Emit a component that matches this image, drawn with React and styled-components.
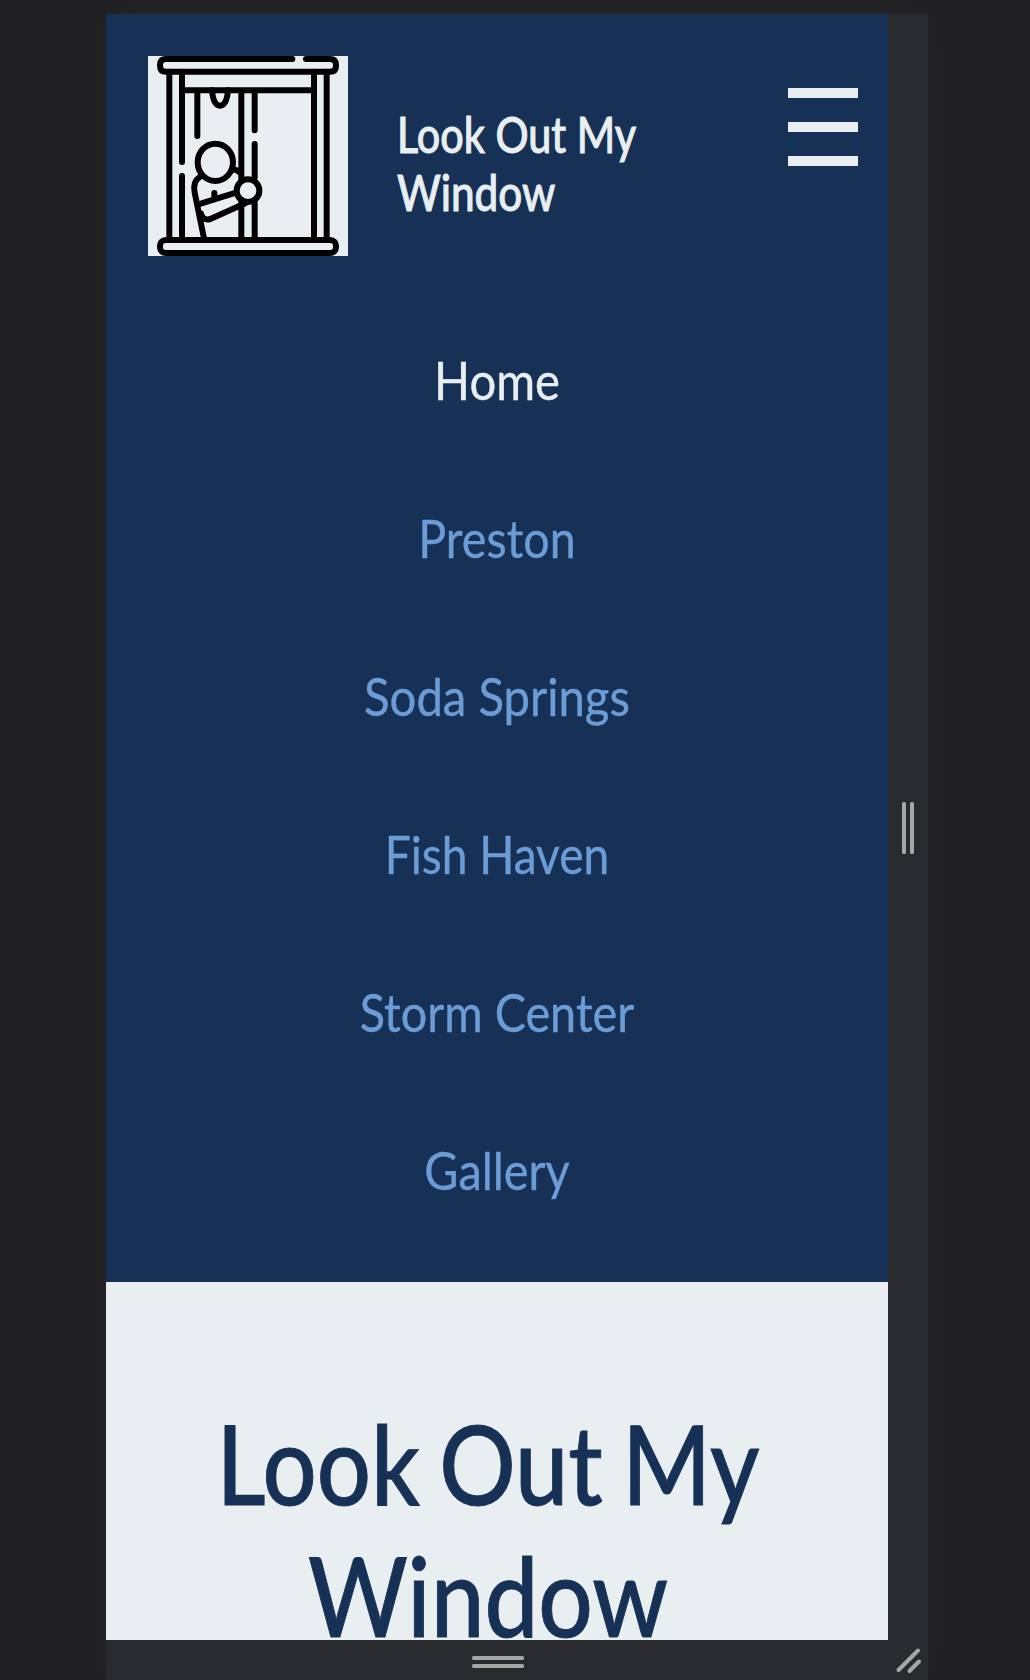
import React from "react";
import styled, { createGlobalStyle } from "styled-components";

const navy = "#173156";
const mist = "#e9eff1";
const sky = "#6b9cd6";

const GlobalStyle = createGlobalStyle`
  *, *::before, *::after { box-sizing: border-box; }
  body {
    margin: 0;
    background: #202022;
    font-family: Lato, "Open Sans", sans-serif;
  }
`;

const Stage = styled.div`
  height: 1680px;
  padding: 14px 102px 0 106px;
  overflow: hidden;
`;

const Device = styled.div`
  display: grid;
  grid-template-columns: 782px 40px;
  grid-template-rows: 1626px 40px;
  background: #292a2d;
  box-shadow: 0 0 40px rgba(255, 245, 235, 0.035);
`;

const Screen = styled.div`
  display: flex;
  flex-direction: column;
  overflow: hidden;
  background: ${mist};
`;

const Rail = styled.div`
  display: flex;
  flex-direction: ${(p) => (p.$vertical ? "row" : "column")};
  align-items: center;
  justify-content: center;
  gap: 4px;
  padding: ${(p) => (p.$vertical ? "2px 0 0" : "4px 0 0 2px")};
`;

const Grip = styled.span`
  width: ${(p) => (p.$vertical ? "4px" : "52px")};
  height: ${(p) => (p.$vertical ? "52px" : "4px")};
  border-radius: 1.5px;
  background: #a6a6a6;
`;

const Header = styled.header`
  flex: none;
  height: 1268px;
  background: ${navy};
`;

const Brand = styled.div`
  display: flex;
  align-items: flex-start;
  height: 287px;
  padding: 42px 30px 0 42px;
`;

const Logo = styled.svg`
  display: block;
  flex: none;
  width: 200px;
  height: 200px;
  background: ${mist};
`;

const SiteName = styled.div`
  flex: 1;
  margin: 49px 0 0 49px;
  color: ${mist};
  font-size: 49.3px;
  font-weight: 500;
  line-height: 58px;
  -webkit-text-stroke: 0.9px ${mist};
`;

const Line = styled.span`
  display: block;
  white-space: nowrap;
  transform: scaleX(${(p) => p.$fit});
  transform-origin: ${(p) => p.$from || "center"};
`;

const MenuButton = styled.button`
  display: flex;
  flex-direction: column;
  gap: 24px;
  width: 70px;
  margin: 32px 0 0;
  padding: 0;
  border: 0;
  background: none;
`;

const Bar = styled.span`
  height: 10px;
  background: ${mist};
`;

const Nav = styled.nav`
  display: flex;
  flex-direction: column;
`;

const NavLink = styled.a`
  color: ${(p) => (p.$active ? mist : sky)};
  font-size: 52.6px;
  line-height: 158px;
  text-align: center;
  text-decoration: none;
  -webkit-text-stroke: 0.4px currentColor;
`;

const Hero = styled.main`
  flex: none;
  padding: 114px 18px 0 0;
`;

const HeroTitle = styled.h1`
  margin: 0;
  color: ${navy};
  font-size: 111px;
  font-weight: 500;
  line-height: 132px;
  text-align: center;
  word-spacing: -0.05em;
  -webkit-text-stroke: 0.9px ${navy};
`;

const links = [
  { label: "Home", fit: 0.897, active: true },
  { label: "Preston", fit: 0.886 },
  { label: "Soda Springs", fit: 0.898 },
  { label: "Fish Haven", fit: 0.876 },
  { label: "Storm Center", fit: 0.889 },
  { label: "Gallery", fit: 0.89 },
];

function WindowLogo() {
  return (
    <Logo viewBox="0 0 600 600" fill="none" stroke="#000" strokeWidth="18" strokeLinecap="round" strokeLinejoin="round" aria-hidden="true">
      <path d="M433 9H54Q36 9 36 27V29Q36 47 54 47H546Q564 47 564 29V27Q564 9 546 9H474" />
      <rect x="36" y="552" width="528" height="39" rx="17" />
      <path d="M64 47V552M536 47V552M498 47V552M102 47V318M102 360V552" />
      <path d="M102 103H498M148 103V240M280 103V552M320 103V223M320 264V365M320 440V552" />
      <path d="M192 103Q196 149 216 149Q236 149 240 103" />
      <path d="M156 362C141 372 135 387 140 410L169 552" />
      <path d="M151 445L264 410M199 411V430M254 340Q267 341 277 351" />
      <path d="M159 473Q164 495 187 489L292 442" />
      <ellipse cx="202" cy="319" rx="53" ry="56" fill={mist} />
      <circle cx="300" cy="404" r="34" fill={mist} />
    </Logo>
  );
}

export default function App() {
  return (
    <>
      <GlobalStyle />
      <Stage>
        <Device>
          <Screen>
            <Header>
              <Brand>
                <WindowLogo />
                <SiteName>
                  <Line $fit={0.837} $from="left">Look Out My</Line>
                  <Line $fit={0.856} $from="left">Window</Line>
                </SiteName>
                <MenuButton aria-label="Menu">
                  <Bar />
                  <Bar />
                  <Bar />
                </MenuButton>
              </Brand>
              <Nav>
                {links.map((link) => (
                  <NavLink key={link.label} href="#" $active={link.active}>
                    <Line $fit={link.fit}>{link.label}</Line>
                  </NavLink>
                ))}
              </Nav>
            </Header>
            <Hero>
              <HeroTitle>
                <Line $fit={0.859}>Look Out My</Line>
                <Line $fit={0.865}>Window</Line>
              </HeroTitle>
            </Hero>
          </Screen>
          <Rail $vertical>
            <Grip $vertical />
            <Grip $vertical />
          </Rail>
          <Rail>
            <Grip />
            <Grip />
          </Rail>
          <svg width="40" height="40" stroke="#a6a6a6" strokeWidth="4" strokeLinecap="round" aria-hidden="true">
            <path d="M10.5 30L30 10.5M21.5 31L31 21.5" />
          </svg>
        </Device>
      </Stage>
    </>
  );
}
